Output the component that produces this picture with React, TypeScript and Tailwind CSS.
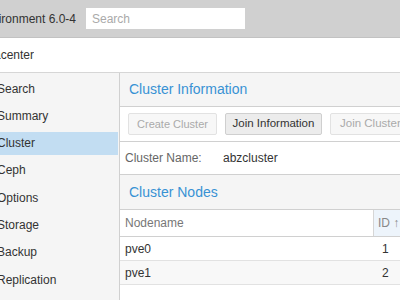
const navItems = ['Search', 'Summary', 'Cluster', 'Ceph', 'Options', 'Storage', 'Backup', 'Replication'];

const nodes = [
  { name: 'pve0', id: 1 },
  { name: 'pve1', id: 2 },
];

export default function App() {
  return (
    <div
      className="w-[400px] h-[300px] overflow-hidden bg-white text-[#333] text-[12px]"
      style={{ fontFamily: '"Liberation Sans", Arial, sans-serif' }}
    >
      {/* top bar */}
      <div className="h-[38px] bg-[#d0d0d0] border-b border-[#c2c2c2] flex items-center">
        <div className="w-[76px] overflow-hidden flex justify-end whitespace-nowrap text-[12px] text-[#333]">
          Proxmox Virtual Environment 6.0-4
        </div>
        <div className="ml-[10px] w-[159px] h-[21px] bg-white flex items-center px-[6px] text-[#aaa]">Search</div>
      </div>

      {/* breadcrumb */}
      <div className="h-[35px] border-b border-[#d6d6d6] flex items-center">
        <div className="w-[34px] overflow-hidden flex justify-end whitespace-nowrap">Datacenter</div>
      </div>

      <div className="flex h-[227px]">
        {/* sidebar */}
        <div className="w-[120px] shrink-0 bg-[#f5f5f5] border-r border-[#d0d0d0] flex flex-col gap-[4.3px] pt-[4px]">
          {navItems.map((item) => (
            <div
              key={item}
              className={`h-[23px] flex items-center whitespace-nowrap ${item === 'Cluster' ? 'bg-[#c2ddf2] mr-[1px]' : ''}`}
            >
              <span className="-ml-[3px]">{item}</span>
            </div>
          ))}
        </div>

        {/* content */}
        <div className="flex-1 min-w-0 flex flex-col overflow-hidden">
          <div className="h-[34px] shrink-0 bg-[#f5f5f5] border-b border-[#d0d0d0] flex items-center pl-[9px] text-[14px] text-[#3892d4] whitespace-nowrap">
            Cluster Information
          </div>
          <div className="h-[35px] shrink-0 border-b border-[#d0d0d0] flex items-center pl-[8px] gap-[8px] whitespace-nowrap text-[11px]">
            <div className="w-[89px] h-[22px] shrink-0 border border-[#e2e2e2] bg-[#f7f7f7] rounded-[2px] flex items-center justify-center text-[#aaa]">
              Create Cluster
            </div>
            <div className="w-[97px] h-[22px] shrink-0 border border-[#cfcfcf] bg-[#ececec] rounded-[2px] flex items-center justify-center text-[#333] text-[11.5px]">
              Join Information
            </div>
            <div className="w-[90px] h-[22px] shrink-0 border border-[#e2e2e2] bg-[#f7f7f7] rounded-[2px] flex items-center pl-[9px] text-[#aaa] text-[11.5px]">
              Join Cluster
            </div>
          </div>
          <div className="h-[33px] shrink-0 border-b border-[#d0d0d0] flex items-center pl-[5px] whitespace-nowrap">
            <span className="w-[98px] text-[#666]">Cluster Name:</span>
            <span>abzcluster</span>
          </div>

          <div className="h-[35px] shrink-0 bg-[#f5f5f5] border-b border-[#d0d0d0] flex items-center pl-[9px] text-[14px] text-[#3892d4] whitespace-nowrap">
            Cluster Nodes
          </div>
          <div className="h-[27px] shrink-0 border-b border-[#d0d0d0] flex whitespace-nowrap">
            <div className="flex-1 flex items-center pl-[5px] text-[#777]">Nodename</div>
            <div className="w-[27px] border-l border-[#d6d6d6] bg-[#edf4fb] flex items-center pl-[4px] text-[#888]">ID ↑</div>
          </div>
          {nodes.map((n, i) => (
            <div
              key={n.name}
              className={`h-[24px] shrink-0 border-b border-[#e2e2e2] flex items-center whitespace-nowrap ${i % 2 ? 'bg-[#f8f8f8]' : ''}`}
            >
              <div className="flex-1 pl-[5px]">{n.name}</div>
              <div className="w-[27px] pl-[9px]">{n.id}</div>
            </div>
          ))}
        </div>
      </div>
    </div>
  );
}
